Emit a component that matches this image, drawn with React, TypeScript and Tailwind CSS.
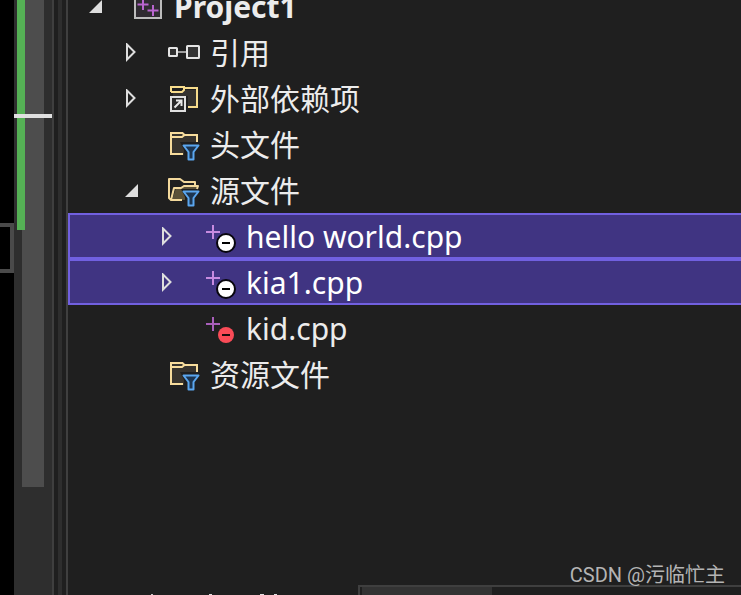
import type { ReactNode } from 'react';

type TreeItem = {
    label: string;
    level: 0 | 1 | 2;
    arrow?: 'open' | 'closed';
    icon: ReactNode;
    selected?: boolean;
};

function ProjectIcon() {
    return (
        <svg viewBox="0 0 32 32" fill="none" className="h-8 w-8">
            <rect x="3" y="2" width="26" height="25" fill="#2f2b31" stroke="#bdbdbd" strokeWidth="2" />
            <path d="M11 8v11M5.500 13.500h11M21 14v11M15.500 19.500h11" stroke="#b965cf" strokeWidth="2" />
        </svg>
    );
}

function ReferencesIcon() {
    return (
        <svg viewBox="0 0 32 32" fill="none" className="h-8 w-8">
            <path d="M9 15h10" stroke="#c8c8c8" strokeWidth="1.500" />
            <rect x="1" y="11" width="8" height="8" rx="0.500" fill="#2f2f2f" stroke="#e4e4e4" strokeWidth="2" />
            <rect x="19" y="9" width="12" height="12" rx="0.500" fill="#333333" stroke="#e4e4e4" strokeWidth="2" />
        </svg>
    );
}

function ExternalIcon() {
    return (
        <svg viewBox="0 0 32 32" fill="none" className="h-8 w-8">
            <path d="M17 7h12v18h-9V13H5V9h10z" fill="#34322f" />
            <path d="M3 9V4h13v3l-2 2H3M16 5h13v19h-9" stroke="#f7dc8c" strokeWidth="2" />
            <rect x="3" y="14" width="14" height="14" fill="#292929" stroke="#e0e0e0" strokeWidth="2" />
            <path d="M6.500 24.500l7-7M8 17.500h5.500V23" stroke="#e8e8e8" strokeWidth="2" />
        </svg>
    );
}

function Funnel() {
    return (
        <path
            d="M15.500 16.500h15l-5 6.500v7.500h-5V23z"
            fill="#1d3550"
            stroke="#5ba6ee"
            strokeWidth="2"
            strokeLinejoin="round"
        />
    );
}

function FilterIcon() {
    return (
        <svg viewBox="0 0 32 32" fill="none" className="h-8 w-8">
            <path d="M3 5h12l2 2h12v6H12l4 8v5H3z" fill="#38342e" />
            <path d="M15 25H3V4h11.500l2 2H29v7M3 8h11l2.500-2" stroke="#f7dc9c" strokeWidth="2" />
            <Funnel />
        </svg>
    );
}

function OpenFilterIcon() {
    return (
        <svg viewBox="0 0 32 32" fill="none" className="h-8 w-8">
            <path d="M4 25l4-12h5l3-3h14v4H13l4 8v3z" fill="#5b5138" />
            <path
                d="M14 25H3l-2-2V4h11l4 3h11v3M3 25l3-12h7l3-2h14l-1 3"
                stroke="#f3d99c"
                strokeWidth="2"
                strokeLinejoin="round"
            />
            <Funnel />
        </svg>
    );
}

function SourceIcon({ excluded = false }: { excluded?: boolean }) {
    return (
        <svg viewBox="0 0 32 32" fill="none" className="h-8 w-8">
            <path
                d="M9 4v14M2 11h14"
                stroke={excluded ? '#a85fba' : '#c78be0'}
                strokeWidth="2"
            />
            {excluded ? (
                <>
                    <circle cx="22" cy="22" r="8" fill="#fa4b57" />
                    <path d="M18 22h8" stroke="#1c0c0e" strokeWidth="2" />
                </>
            ) : (
                <>
                    <circle cx="22" cy="22" r="9" fill="#ffffff" stroke="#08060d" strokeWidth="2" />
                    <path d="M18 22h8" stroke="#000000" strokeWidth="2" />
                </>
            )}
        </svg>
    );
}

const items: TreeItem[] = [
    { label: 'Project1', level: 0, arrow: 'open', icon: <ProjectIcon /> },
    { label: '引用', level: 1, arrow: 'closed', icon: <ReferencesIcon /> },
    { label: '外部依赖项', level: 1, arrow: 'closed', icon: <ExternalIcon /> },
    { label: '头文件', level: 1, icon: <FilterIcon /> },
    { label: '源文件', level: 1, arrow: 'open', icon: <OpenFilterIcon /> },
    { label: 'hello world.cpp', level: 2, arrow: 'closed', icon: <SourceIcon />, selected: true },
    { label: 'kia1.cpp', level: 2, arrow: 'closed', icon: <SourceIcon />, selected: true },
    { label: 'kid.cpp', level: 2, icon: <SourceIcon excluded /> },
    { label: '资源文件', level: 1, icon: <FilterIcon /> },
];

const indents = ['pl-4', 'pl-[52px]', 'pl-[88px]'];

function Arrow({ type }: { type: 'open' | 'closed' }) {
    return (
        <svg viewBox="0 0 20 20" fill="none" className="h-5 w-5">
            {type === 'open' ? (
                <path d="M16 3v13H3z" fill="#dedede" />
            ) : (
                <path d="M5 1.500v15l7.500-7.500z" stroke="#dedede" strokeWidth="2" />
            )}
        </svg>
    );
}

function TreeRow({ item }: { item: TreeItem }) {
    return (
        <li
            role="treeitem"
            aria-level={item.level + 1}
            aria-selected={!!item.selected}
            aria-expanded={item.arrow ? item.arrow === 'open' : undefined}
            className={`flex h-[46px] items-center border-2 border-r-0 pt-0.5 ${indents[item.level]} ${
                item.selected ? 'border-[#7160e0] bg-[#403482] text-white' : 'border-transparent text-[#ececec]'
            }`}
        >
            <span className="h-5 w-5 shrink-0">{item.arrow && <Arrow type={item.arrow} />}</span>
            <span className="ml-[26px] shrink-0">{item.icon}</span>
            <span className={`ml-2.5 whitespace-nowrap text-[30px] leading-10 ${item.level === 0 ? 'font-bold' : ''}`}>
                {item.label}
            </span>
        </li>
    );
}

function EditorScrollbar() {
    return (
        <div className="relative w-10 shrink-0 border-r-2 border-[#3f3f3f] bg-[#2e2e2e]">
            <div className="ml-2 h-[487px] w-[22px] bg-[#4d4d4d]" />
            <div className="absolute left-[3px] top-0 h-[230px] w-2 bg-[#55b155]" />
            <div className="absolute inset-x-0 top-[114px] h-1 bg-[#e0e0e0]" />
        </div>
    );
}

export default function App() {
    return (
        <div className="flex h-screen overflow-hidden bg-[#1f1f1f] font-['Noto_Sans','Noto_Sans_CJK_SC',sans-serif]">
            <div className="w-3.5 shrink-0 bg-black pt-[223px]">
                <div className="h-[50px] border-4 border-l-0 border-[#4a4a4a]" />
            </div>
            <EditorScrollbar />
            <div className="flex w-3 shrink-0 justify-center">
                <div className="w-1 bg-[#2e2e2e]" />
            </div>

            <main className="relative flex min-w-0 flex-1 flex-col border-l-2 border-[#3f3f3f]">
                <ul role="tree" aria-label="Project1" className="-mt-[17px] flex-1">
                    {items.map((item) => (
                        <TreeRow key={item.label} item={item} />
                    ))}
                </ul>
                <div className="flex h-2.5 shrink-0">
                    {/* tops of the active tab's label */}
                    <div className="flex w-[290px] items-end pl-[83px]">
                        <span className="h-px w-0.5 bg-[#c8c8c8]" />
                        <span className="ml-14 h-px w-[3px] bg-[#e0e0e0]" />
                        <span className="ml-12 h-px w-1 bg-[#e0e0e0]" />
                        <span className="ml-2.5 h-px w-[3px] bg-[#e0e0e0]" />
                    </div>
                    <div className="flex-1 border-l-2 border-t-2 border-[#3f3f3f] pl-0.5">
                        <div className="h-full w-[130px] bg-[#333333]" />
                    </div>
                </div>
                <p className="absolute bottom-1.5 right-4 font-[Roboto,'Noto_Sans_CJK_SC',sans-serif] text-xl leading-7 text-[#b4b4b4]">
                    CSDN @污临忙主
                </p>
            </main>
        </div>
    );
}
